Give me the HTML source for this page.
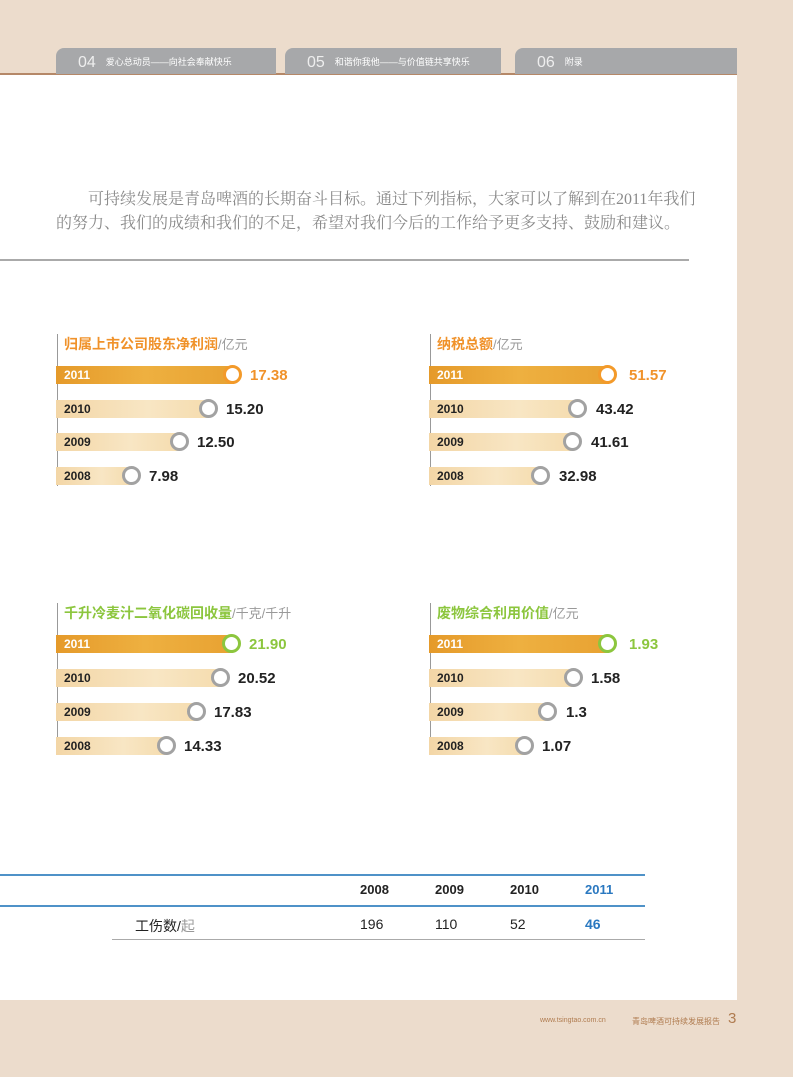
<!DOCTYPE html>
<html><head><meta charset="utf-8"><style>
body{margin:0;width:793px;height:1077px;background:#ecdccc;position:relative;overflow:hidden;font-family:"Liberation Sans","Noto Sans CJK SC",sans-serif}
.a{position:absolute}
.tab{position:absolute;top:48px;height:26px;background:#a7a8aa;border-radius:8px 0 0 0;color:#fff;font-size:9px;line-height:28px}
.tab b{font-weight:normal;font-size:16px;margin:0 10px 0 22px;vertical-align:-2px;color:#eee}
.bar{position:absolute;height:18px;background:linear-gradient(90deg,#f3d6a6,#f8e6c4 60%,#f5dcae);font-size:12px;font-weight:bold;color:#222;line-height:18px;padding-left:8px;box-sizing:border-box}
.bar.h{background:linear-gradient(90deg,#e59a2a,#eeb040 50%,#e8a232);color:#fff}
.c{position:absolute;width:13px;height:13px;border:3px solid #a2a2a2;border-radius:50%;background:#fff;margin:-1px 0 0 -1px}
.v{position:absolute;font-size:15px;font-weight:bold;color:#222;line-height:18px;margin-top:1px}
.t{position:absolute;font-size:14px;font-weight:bold;white-space:nowrap}
.t span{font-weight:normal;color:#999;font-size:13px}
.vl{position:absolute;width:1px;background:#999}
.th{position:absolute;font-size:13px;font-weight:bold;color:#222}
.td{position:absolute;font-size:14px;color:#222}
.p{position:absolute;font-family:'Liberation Serif','Noto Serif CJK SC',serif;font-size:16px;color:#8a8a8a;white-space:nowrap}
</style></head><body>
<div class="a" style="left:0;top:74px;width:737px;height:926px;background:#fff"></div>
<div class="a" style="left:0;top:73px;width:737px;height:2px;background:#b58868"></div>
<div class="tab" style="left:56px;width:220px"><b>04</b>爱心总动员——向社会奉献快乐</div>
<div class="tab" style="left:285px;width:216px"><b>05</b>和谐你我他——与价值链共享快乐</div>
<div class="tab" style="left:515px;width:222px"><b>06</b>附录</div>

<div class="p" style="left:88px;top:186px">可持续发展是青岛啤酒的长期奋斗目标。通过下列指标，大家可以了解到在2011年我们</div>
<div class="p" style="left:56px;top:210px">的努力、我们的成绩和我们的不足，希望对我们今后的工作给予更多支持、鼓励和建议。</div>
<div class="a" style="left:0;top:259px;width:689px;height:2px;background:#aaa"></div>

<div class="vl" style="left:57px;top:334px;height:152px"></div>
<div class="t" style="left:64px;top:334px;color:#f0922a">归属上市公司股东净利润<span>/亿元</span></div>
<div class="bar h" style="left:56px;top:366px;width:178px">2011</div><div class="c" style="left:224px;top:366px;border-color:#f39a2a"></div><div class="v" style="left:250px;top:366px;color:#f0922a">17.38</div>
<div class="bar" style="left:56px;top:400px;width:153px">2010</div><div class="c" style="left:200px;top:400px"></div><div class="v" style="left:226px;top:400px">15.20</div>
<div class="bar" style="left:56px;top:433px;width:124px">2009</div><div class="c" style="left:171px;top:433px"></div><div class="v" style="left:197px;top:433px">12.50</div>
<div class="bar" style="left:56px;top:467px;width:76px">2008</div><div class="c" style="left:123px;top:467px"></div><div class="v" style="left:149px;top:467px">7.98</div>

<div class="vl" style="left:430px;top:334px;height:152px"></div>
<div class="t" style="left:437px;top:334px;color:#f0922a">纳税总额<span>/亿元</span></div>
<div class="bar h" style="left:429px;top:366px;width:180px">2011</div><div class="c" style="left:599px;top:366px;border-color:#f39a2a"></div><div class="v" style="left:629px;top:366px;color:#f0922a">51.57</div>
<div class="bar" style="left:429px;top:400px;width:150px">2010</div><div class="c" style="left:569px;top:400px"></div><div class="v" style="left:596px;top:400px">43.42</div>
<div class="bar" style="left:429px;top:433px;width:145px">2009</div><div class="c" style="left:564px;top:433px"></div><div class="v" style="left:591px;top:433px">41.61</div>
<div class="bar" style="left:429px;top:467px;width:113px">2008</div><div class="c" style="left:532px;top:467px"></div><div class="v" style="left:559px;top:467px">32.98</div>

<div class="vl" style="left:57px;top:603px;height:152px"></div>
<div class="t" style="left:64px;top:603px;color:#8cc63e">千升冷麦汁二氧化碳回收量<span>/千克/千升</span></div>
<div class="bar h" style="left:56px;top:635px;width:177px">2011</div><div class="c" style="left:223px;top:635px;border-color:#8cc63e"></div><div class="v" style="left:249px;top:635px;color:#8cc63e">21.90</div>
<div class="bar" style="left:56px;top:669px;width:166px">2010</div><div class="c" style="left:212px;top:669px"></div><div class="v" style="left:238px;top:669px">20.52</div>
<div class="bar" style="left:56px;top:703px;width:142px">2009</div><div class="c" style="left:188px;top:703px"></div><div class="v" style="left:214px;top:703px">17.83</div>
<div class="bar" style="left:56px;top:737px;width:112px">2008</div><div class="c" style="left:158px;top:737px"></div><div class="v" style="left:184px;top:737px">14.33</div>

<div class="vl" style="left:430px;top:603px;height:152px"></div>
<div class="t" style="left:437px;top:603px;color:#8cc63e">废物综合利用价值<span>/亿元</span></div>
<div class="bar h" style="left:429px;top:635px;width:180px">2011</div><div class="c" style="left:599px;top:635px;border-color:#8cc63e"></div><div class="v" style="left:629px;top:635px;color:#8cc63e">1.93</div>
<div class="bar" style="left:429px;top:669px;width:146px">2010</div><div class="c" style="left:565px;top:669px"></div><div class="v" style="left:591px;top:669px">1.58</div>
<div class="bar" style="left:429px;top:703px;width:120px">2009</div><div class="c" style="left:539px;top:703px"></div><div class="v" style="left:566px;top:703px">1.3</div>
<div class="bar" style="left:429px;top:737px;width:97px">2008</div><div class="c" style="left:516px;top:737px"></div><div class="v" style="left:542px;top:737px">1.07</div>

<div class="a" style="left:0;top:874px;width:645px;height:2px;background:#4f92c8"></div>
<div class="a" style="left:0;top:905px;width:645px;height:2px;background:#4f92c8"></div>
<div class="a" style="left:112px;top:939px;width:533px;height:1px;background:#aaa"></div>
<div class="th" style="left:360px;top:882px">2008</div>
<div class="th" style="left:435px;top:882px">2009</div>
<div class="th" style="left:510px;top:882px">2010</div>
<div class="th" style="left:585px;top:882px;color:#2a78c0">2011</div>
<div class="td" style="left:135px;top:916px">工伤数/<span style="color:#999">起</span></div>
<div class="td" style="left:360px;top:916px">196</div>
<div class="td" style="left:435px;top:916px">110</div>
<div class="td" style="left:510px;top:916px">52</div>
<div class="td" style="left:585px;top:916px;color:#2a78c0;font-weight:bold">46</div>

<div class="a" style="left:540px;top:1017px;font-size:7px;color:#b07c50">www.tsingtao.com.cn</div>
<div class="a" style="left:632px;top:1016px;font-size:8px;color:#b07c50">青岛啤酒可持续发展报告</div>
<div class="a" style="left:728px;top:1010px;font-size:15px;color:#b07c50">3</div>
</body></html>
